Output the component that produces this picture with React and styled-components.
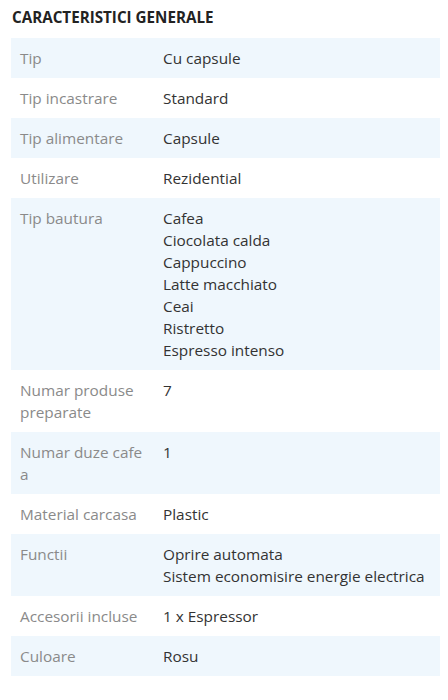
import React from 'react';
import styled, { createGlobalStyle } from 'styled-components';

const GlobalStyle = createGlobalStyle`
  body {
    margin: 0;
    background: #ffffff;
    font-family: "Open Sans", "Noto Sans", sans-serif;
  }
`;

const Section = styled.div`
  width: 448px;
  padding: 6px 8px 0 11px;
  box-sizing: border-box;
`;

const Title = styled.h2`
  margin: 0 0 10px 1px;
  font-size: 15.2px;
  line-height: 22px;
  font-weight: 700;
  color: #222;
`;

const Table = styled.div`
  display: flex;
  flex-direction: column;
`;

const Row = styled.div`
  display: grid;
  grid-template-columns: 152px 1fr;
  padding: 9px 0;
  font-size: 15.35px;
  line-height: 22px;
  background: ${p => (p.$shaded ? '#eff7fd' : 'transparent')};
`;

const Label = styled.div`
  padding: 0 16px 0 9px;
  color: #8a8a8a;
`;

const Value = styled.div`
  display: flex;
  flex-direction: column;
  color: #333;
`;

const specs = [
  ['Tip', ['Cu capsule']],
  ['Tip incastrare', ['Standard']],
  ['Tip alimentare', ['Capsule']],
  ['Utilizare', ['Rezidential']],
  ['Tip bautura', ['Cafea', 'Ciocolata calda', 'Cappuccino', 'Latte macchiato', 'Ceai', 'Ristretto', 'Espresso intenso']],
  ['Numar produse preparate', ['7']],
  ['Numar duze cafe a', ['1']],
  ['Material carcasa', ['Plastic']],
  ['Functii', ['Oprire automata', 'Sistem economisire energie electrica']],
  ['Accesorii incluse', ['1 x Espressor']],
  ['Culoare', ['Rosu']],
];

export default function App() {
  return (
    <>
      <GlobalStyle />
      <Section>
        <Title>CARACTERISTICI GENERALE</Title>
        <Table>
          {specs.map(([label, values], i) => (
            <Row key={label} $shaded={i % 2 === 0}>
              <Label>{label}</Label>
              <Value>
                {values.map(v => <span key={v}>{v}</span>)}
              </Value>
            </Row>
          ))}
        </Table>
      </Section>
    </>
  );
}
